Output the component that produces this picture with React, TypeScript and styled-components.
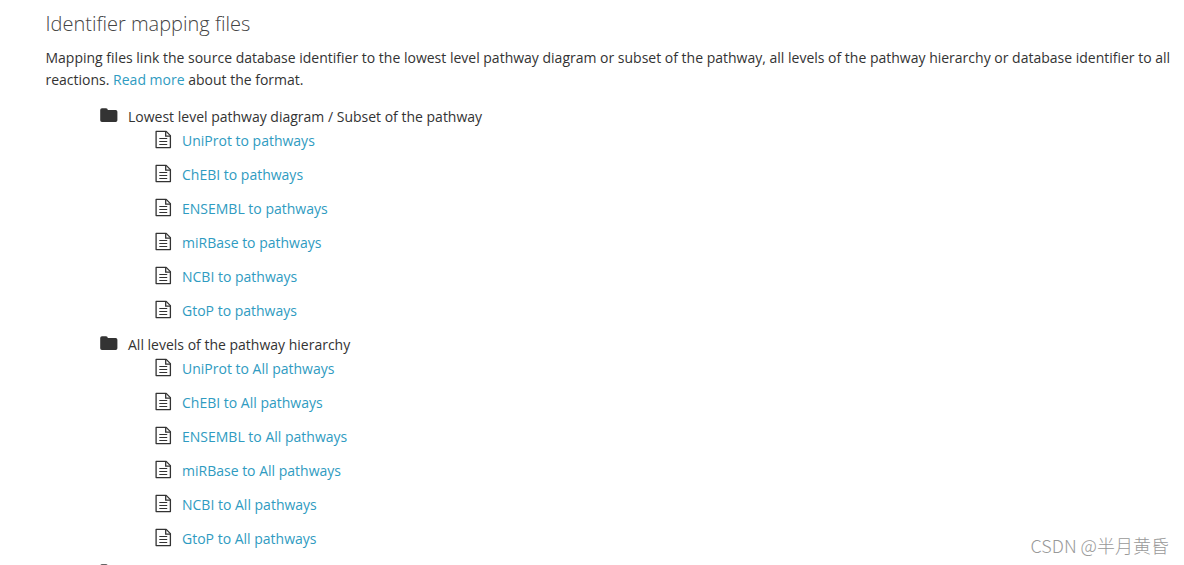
import styled, { createGlobalStyle } from 'styled-components';

const lowestLevelFiles = [
  'UniProt to pathways',
  'ChEBI to pathways',
  'ENSEMBL to pathways',
  'miRBase to pathways',
  'NCBI to pathways',
  'GtoP to pathways',
];

const allLevelsFiles = [
  'UniProt to All pathways',
  'ChEBI to All pathways',
  'ENSEMBL to All pathways',
  'miRBase to All pathways',
  'NCBI to All pathways',
  'GtoP to All pathways',
];

const GlobalStyle = createGlobalStyle`
  body {
    margin: 0;
    background-color: #fff;
    color: #333;
    font-family: 'Open Sans', 'Noto Sans', sans-serif;
    font-size: 14px;
  }
`;

const Page = styled.main`
  position: relative;
  box-sizing: border-box;
  height: 565px;
  overflow: hidden;
  padding: 10px 10px 0 45.5px;
`;

const Title = styled.h3`
  margin: 0;
  color: #444;
  font-size: 20px;
  font-weight: 300;
  line-height: 28px;
`;

const Description = styled.p`
  margin: 9px 0 0;
  line-height: 22px;
`;

const Link = styled.a`
  color: #2f9bc1;
  text-decoration: none;
`;

const Folders = styled.ul`
  list-style: none;
  margin: 14px 0 0 54.5px;
  padding: 0;
`;

const FolderItem = styled.li`
  height: 228px;
`;

const FolderHeader = styled.div`
  display: flex;
  align-items: flex-start;
  gap: 10px;
  height: 24px;
  line-height: 24px;

  svg {
    margin-top: 3px;
  }
`;

const Files = styled.ul`
  list-style: none;
  margin: 0 0 0 55px;
  padding: 0;
`;

const FileItem = styled.li`
  display: flex;
  align-items: flex-start;
  gap: 10px;
  height: 34px;
  line-height: 24px;

  svg {
    margin-top: 1px;
  }
`;

const Watermark = styled.span`
  position: absolute;
  right: 15px;
  bottom: 8px;
  color: #999;
  font-family: 'Noto Sans CJK SC', sans-serif;
  font-size: 18px;
  font-weight: 300;
  line-height: 24px;
`;

const FolderIcon = () => (
  <svg width='18' height='15' viewBox='0 0 18 15' fill='#333'>
    <path d='M.2 2Q.2.2 2 .2H6Q7.8.2 7.8 2H15.7Q17.4 2 17.4 3.8V12.2Q17.4 14 15.7 14H2Q.2 14 .2 12.2Z' />
  </svg>
);

const FileIcon = () => (
  <svg width='17' height='19' viewBox='0 0 17 19' fill='none' stroke='#333'>
    <path d='M1.1 1.4H11.2L15.4 5.6V17.6H1.1Z' strokeWidth='1.3' strokeLinejoin='round' />
    <path d='M10.7 1.5V6.2H15.4' strokeWidth='1.3' />
    <path d='M4.3 8.5H12.2M4.3 11.5H12.2M4.3 14.5H12.2' strokeWidth='1.2' />
  </svg>
);

const Folder = ({ title, files }: { title?: string; files?: string[] }) => (
  <FolderItem>
    <FolderHeader>
      <FolderIcon />
      {title}
    </FolderHeader>
    <Files>
      {files?.map((file) => (
        <FileItem key={file}>
          <FileIcon />
          <Link href='#'>{file}</Link>
        </FileItem>
      ))}
    </Files>
  </FolderItem>
);

const App = () => (
  <>
    <GlobalStyle />
    <Page>
      <Title>Identifier mapping files</Title>
      <Description>
        Mapping files link the source database identifier to the lowest level
        pathway diagram or subset of the pathway, all levels of the pathway
        hierarchy or database identifier to all reactions.{' '}
        <Link href='#'>Read more</Link> about the format.
      </Description>
      <Folders>
        <Folder
          title='Lowest level pathway diagram / Subset of the pathway'
          files={lowestLevelFiles}
        />
        <Folder title='All levels of the pathway hierarchy' files={allLevelsFiles} />
        <Folder />
      </Folders>
      <Watermark>CSDN @半月黄昏</Watermark>
    </Page>
  </>
);

export default App;
